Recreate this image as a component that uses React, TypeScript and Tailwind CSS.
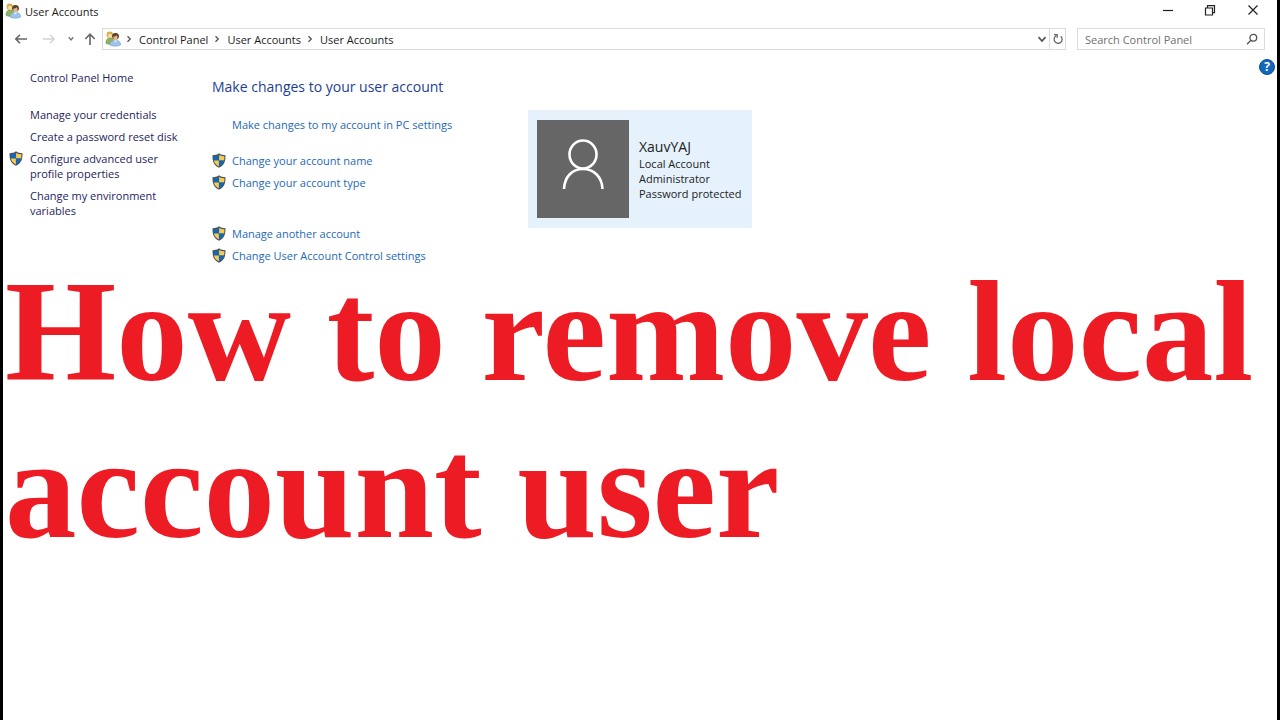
import React from "react";

function UsersIcon() {
  return (
    <svg viewBox="0 0 16 16" className="h-4 w-4 shrink-0" aria-hidden="true">
      <path d="M1 12.500c-.3-3 .8-5.500 4-5.500s4 2 4 5.500c-2 1-6 1-8 0z" fill="#8fb45c" stroke="#5d8a42" strokeWidth=".5" />
      <circle cx="4.800" cy="3.800" r="3.200" fill="#d9ab4a" />
      <circle cx="5" cy="4.700" r="2" fill="#f6dcae" />
      <path d="M5 14c-.3-3 1.500-4.700 5.300-4.700 3.400 0 5.500 1.700 5.200 4.700-2.500 1.600-8 1.600-10.500 0z" fill="#9cc4e8" stroke="#6791bf" strokeWidth=".5" />
      <circle cx="10.500" cy="5.300" r="3.400" fill="#5b4028" />
      <path d="M8.300 5.500c1.500.2 2.500-.3 3.300-1.200.8.700 1.200 2 .8 3.200-.5 1.300-1.200 1.900-2.200 1.900-1.200 0-2-1.900-1.900-3.900z" fill="#e6b88c" />
      <path d="M8.800 9.600l1.600 2 1.700-2z" fill="#f4f8fb" />
    </svg>
  );
}

function Shield() {
  return (
    <svg viewBox="0 0 14 15" className="h-[15px] w-[14px] shrink-0" aria-hidden="true">
      <path d="M7 .2C5.200 1.600 3 2.100.5 2.200c0 6.200.9 9.800 6.500 12.600 5.600-2.800 6.500-6.400 6.500-12.600C11 2.100 8.800 1.600 7 .2z" fill="#4a5358" />
      <path d="M6.900 1.900v5.600H1.900c-.2-1.300-.3-2.600-.3-4.200 2-.1 3.800-.6 5.300-1.400z" fill="#1268b8" />
      <path d="M7.100 1.900v5.600h5c.2-1.300.3-2.600.3-4.200-2-.1-3.800-.6-5.300-1.400z" fill="#f5cb55" />
      <path d="M6.900 7.500v6.100C4.100 12 2.500 10.300 1.900 7.500z" fill="#f5cb55" />
      <path d="M7.100 7.500v6.100c2.800-1.600 4.400-3.300 5-6.100z" fill="#1268b8" />
    </svg>
  );
}

function Crumb({ label }: { label: string }) {
  return (
    <li className="flex items-center">
      <svg viewBox="0 0 6 8" className="mr-[7px] h-2 w-[6px]" fill="none" stroke="#555" strokeWidth="1.300" aria-hidden="true">
        <path d="M1.500 1.200 4.300 4 1.500 6.800" />
      </svg>
      <a href="#" className="mr-[6px] text-[#1c1c1c]">{label}</a>
    </li>
  );
}

function TitleBar() {
  return (
    <header className="flex h-[22px] items-center pl-[2px] pr-4">
      <UsersIcon />
      <span className="ml-1 text-[#1c1c1c]">User Accounts</span>
      <div className="ml-auto flex gap-[27px] pb-[2px]">
        <button aria-label="Minimize" className="h-4 w-4">
          <svg viewBox="0 0 16 16" fill="none" stroke="#222" strokeWidth="1.200"><path d="M4 8.500h10" /></svg>
        </button>
        <button aria-label="Restore" className="h-4 w-4">
          <svg viewBox="0 0 16 16" fill="none" stroke="#222" strokeWidth="1.200">
            <path d="M3.500 6h7v7h-7zM5.500 5.800V3.700h7v7h-1.800" />
          </svg>
        </button>
        <button aria-label="Close" className="h-4 w-4">
          <svg viewBox="0 0 16 16" fill="none" stroke="#222" strokeWidth="1.200"><path d="M3.500 3.500l9 9M12.500 3.500l-9 9" /></svg>
        </button>
      </div>
    </header>
  );
}

function NavBar() {
  return (
    <nav className="mt-[6px] flex h-[22px] items-center pl-[11px] pr-3">
      <button aria-label="Back" className="h-[14px] w-[14px]">
        <svg viewBox="0 0 14 14" fill="none" stroke="#666" strokeWidth="1.600"><path d="M13 7H2M6 2.800 1.800 7 6 11.200" /></svg>
      </button>
      <button aria-label="Forward" className="ml-[14px] h-[14px] w-[14px]">
        <svg viewBox="0 0 14 14" fill="none" stroke="#d4d4d4" strokeWidth="1.400"><path d="M1 7h11M8 2.800 12.200 7 8 11.200" /></svg>
      </button>
      <button aria-label="Recent locations" className="ml-[11px] h-2 w-2">
        <svg viewBox="0 0 8 8" fill="none" stroke="#777" strokeWidth="1.400"><path d="M1.800 2.300 4 5l2.200-2.700" /></svg>
      </button>
      <button aria-label="Up" className="ml-2 h-[14px] w-[14px]">
        <svg viewBox="0 0 14 14" fill="none" stroke="#666" strokeWidth="1.600"><path d="M7 13V2.500M2.300 7 7 2.200 11.700 7" /></svg>
      </button>
      <div className="ml-[5px] flex h-full flex-1 items-center border border-[#dcdcdc] pl-[2px]">
        <UsersIcon />
        <ol className="ml-[5px] flex items-center">
          <Crumb label="Control Panel" />
          <Crumb label="User Accounts" />
          <Crumb label="User Accounts" />
        </ol>
        <button aria-label="Previous locations" className="ml-auto mr-[2px] h-[10px] w-[10px]">
          <svg viewBox="0 0 10 10" fill="none" stroke="#555" strokeWidth="1.700"><path d="M1.500 3.200 5 7l3.500-3.800" /></svg>
        </button>
        <button aria-label="Refresh" className="flex h-full w-4 items-center justify-center border-l border-[#dcdcdc]">
          <svg viewBox="0 0 12 12" className="h-3 w-3" fill="none" stroke="#666" strokeWidth="1.300">
            <path d="M8.700 3.200a4 4 0 1 1-4.600-.4M2 1.600h3.200v3.200" />
          </svg>
        </button>
      </div>
      <div className="ml-[11px] flex h-full w-[188px] items-center border border-[#dcdcdc] pl-[7px] pr-[6px]">
        <input type="search" aria-label="Search Control Panel" placeholder="Search Control Panel" className="min-w-0 flex-1 bg-transparent outline-none placeholder:text-[#707070]" />
        <button aria-label="Search" className="h-3 w-3">
          <svg viewBox="0 0 12 12" fill="none" stroke="#555" strokeWidth="1.300"><circle cx="7.300" cy="4.800" r="3.400" /><path d="M4.900 7.300 1 11.200" /></svg>
        </button>
      </div>
    </nav>
  );
}

function TaskLink({ label }: { label: string }) {
  return (
    <li className="flex items-center gap-[6px]">
      <Shield />
      <a href="#" className="text-[#2469b5]">{label}</a>
    </li>
  );
}

export default function App() {
  return (
    <div className="min-h-screen border-x-[3px] border-black bg-white font-['Open_Sans','Noto_Sans',sans-serif] text-[11px] leading-[15px]">
      <TitleBar />
      <NavBar />
      <main>
        <div className="flex items-start pt-[9px]">
          <aside className="w-[209px] pl-[6px] pt-[11px] text-[#25255c]">
            <a href="#" className="ml-[21px] block">Control Panel Home</a>
            <ul className="mt-[22px] flex flex-col gap-[7px]">
              <li className="pl-[21px]"><a href="#">Manage your credentials</a></li>
              <li className="pl-[21px]"><a href="#">Create a password reset disk</a></li>
              <li className="flex gap-[7px]">
                <Shield />
                <a href="#" className="w-[140px]">Configure advanced user profile properties</a>
              </li>
              <li className="pl-[21px]"><a href="#" className="block w-[140px]">Change my environment variables</a></li>
            </ul>
          </aside>
          <section className="w-[316px] pt-[18px]">
            <h2 className="text-sm leading-5 text-[#1d3f8f]">Make changes to your user account</h2>
            <a href="#" className="ml-5 mt-5 block text-[#2469b5]">Make changes to my account in PC settings</a>
            <ul className="mt-[21px] flex flex-col gap-[7px]">
              <TaskLink label="Change your account name" />
              <TaskLink label="Change your account type" />
            </ul>
            <ul className="mt-9 flex flex-col gap-[7px]">
              <TaskLink label="Manage another account" />
              <TaskLink label="Change User Account Control settings" />
            </ul>
          </section>
          <section className="mt-[51px] flex h-[118px] w-[224px] items-center gap-[10px] bg-[#e5f2fc] px-[9px]">
            <svg viewBox="0 0 92 98" className="h-[98px] w-[92px] shrink-0 bg-[#666]" fill="none" stroke="#fff" strokeWidth="2.600" role="img" aria-label="Account picture">
              <ellipse cx="46" cy="34.500" rx="13.500" ry="14" />
              <path d="M27 69c.5-12 8-20 19-20s19 8 19.500 20" />
            </svg>
            <div className="text-[#222]">
              <h3 className="text-sm leading-[18px]">XauvYAJ</h3>
              <p>Local Account</p>
              <p>Administrator</p>
              <p>Password protected</p>
            </div>
          </section>
          <button aria-label="Help" className="ml-auto mr-[2px] flex h-4 w-4 items-center justify-center rounded-full border border-[#0a4f92] bg-[#1368bd] text-xs font-bold text-white">?</button>
        </div>
        <h1 className="-mt-[9px] pl-[2px] font-['Liberation_Serif',serif] text-[143px] font-bold leading-[157px] text-[#ed1c24]">
          How to remove local account user
        </h1>
      </main>
    </div>
  );
}
